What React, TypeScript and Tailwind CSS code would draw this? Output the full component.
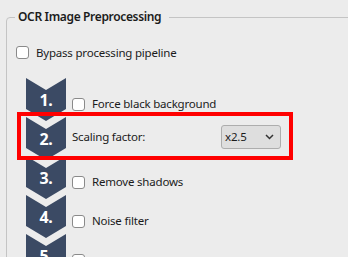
import React from "react";

const steps = [
  { n: "1.", label: "Force black background", kind: "check" },
  { n: "2.", label: "Scaling factor:", kind: "select" },
  { n: "3.", label: "Remove shadows", kind: "check" },
  { n: "4.", label: "Noise filter", kind: "check" },
  { n: "5.", label: "", kind: "check" },
];

function Box() {
  return (
    <input
      type="checkbox"
      className="appearance-none m-0 w-[13px] h-[13px] shrink-0 rounded-[3px] border border-[#8a8a8a] bg-white"
    />
  );
}

function Chevrons() {
  const period = 39;
  return (
    <svg width="40" height={period * steps.length} className="shrink-0">
      {steps.map((s, i) => {
        const y = i * period;
        return (
          <g key={i}>
            <polygon
              points={`0,${y} 20,${y + 12} 40,${y} 40,${y + 31} 20,${y + 43} 0,${y + 31}`}
              fill="#3b4a64"
            />
            <text
              x="20"
              y={y + 28}
              textAnchor="middle"
              fill="#ffffff"
              fontSize="16"
              fontWeight="700"
              fontFamily="'Noto Sans', sans-serif"
            >
              {s.n}
            </text>
          </g>
        );
      })}
    </svg>
  );
}

export default function App() {
  return (
    <div className="relative w-[348px] h-[257px] overflow-hidden bg-[#ececec] text-[11.5px] tracking-[-0.2px] text-[#1b1b1b] font-['Noto_Sans',sans-serif]">
      <fieldset className="ml-[6px] mt-[8px] w-[380px] h-[300px] rounded-[4px] border border-[#c4c4c4] p-0">
        <legend className="ml-[8px] pl-[3px] pr-[8px] text-[12px] leading-[18px] font-semibold tracking-[-0.35px]">
          OCR Image Preprocessing
        </legend>
        <div className="pl-[9px]">
          <label className="mt-[20px] flex h-[13px] items-center gap-[7px]">
            <Box />
            <span>Bypass processing pipeline</span>
          </label>

          <div className="mt-[19px] ml-[10px] flex">
            <Chevrons />
            <div className="ml-[6px] flex w-[209px] flex-col">
              {steps.map((s) =>
                s.kind === "select" ? (
                  <div key={s.n} className="flex h-[39px] items-center justify-between">
                    <span>{s.label}</span>
                    <div className="flex h-[24px] w-[60px] items-center justify-between rounded-[3px] border border-[#adadad] bg-[#dedede] pl-[3px] pr-[6px]">
                      <span>x2.5</span>
                      <svg width="9" height="6" viewBox="0 0 9 6">
                        <path d="M1 1 L4.5 4.5 L8 1" fill="none" stroke="#333" strokeWidth="1.5" />
                      </svg>
                    </div>
                  </div>
                ) : (
                  <label key={s.n} className="flex h-[39px] items-center gap-[7px] pt-[13px]">
                    <Box />
                    {s.label && <span>{s.label}</span>}
                  </label>
                )
              )}
            </div>
          </div>
        </div>
      </fieldset>

      {/* highlight annotation */}
      <div className="pointer-events-none absolute left-[17px] top-[112px] h-[48px] w-[276px] border-4 border-[#ff0000]" />
    </div>
  );
}
